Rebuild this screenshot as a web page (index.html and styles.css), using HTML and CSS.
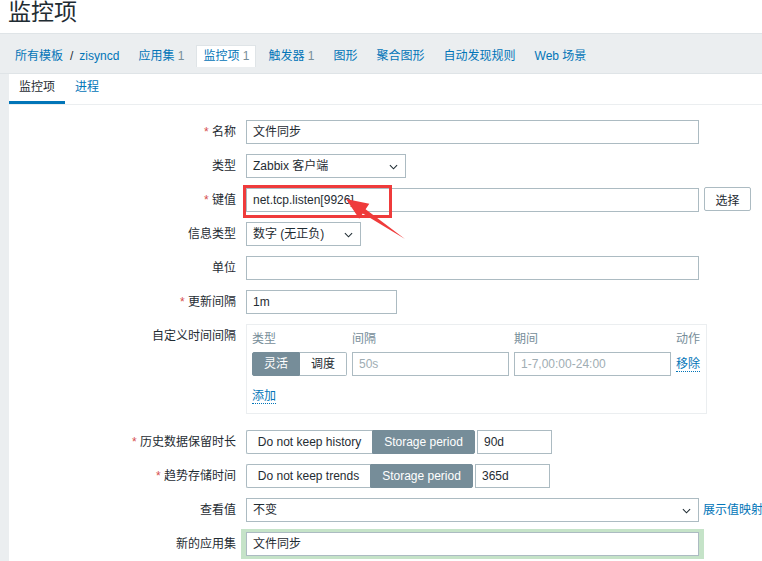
FILE: index.html
```html
<!DOCTYPE html>
<html lang="zh">
<head>
<meta charset="utf-8">
<title>监控项</title>
<link rel="stylesheet" href="styles.css">
</head>
<body>
<header class="title">监控项</header>
<nav class="nav">
  <div class="crumbs"><a>所有模板</a><span class="sep">/</span><a>zisyncd</a></div>
  <a class="nav-item">应用集 <span class="cnt">1</span></a>
  <span class="nav-item active">监控项 <span class="cnt">1</span></span>
  <a class="nav-item">触发器 <span class="cnt">1</span></a>
  <a class="nav-item">图形</a>
  <a class="nav-item">聚合图形</a>
  <a class="nav-item">自动发现规则</a>
  <a class="nav-item">Web 场景</a>
</nav>
<main class="panel">
  <ul class="tabs">
    <li class="tab active">监控项</li>
    <li class="tab"><a>进程</a></li>
  </ul>
  <div class="form">
    <div class="row">
      <label class="lbl"><span class="req">*</span> 名称</label>
      <div class="ctl"><div class="input w-full">文件同步</div></div>
    </div>
    <div class="row">
      <label class="lbl">类型</label>
      <div class="ctl"><div class="select w-type">Zabbix 客户端<svg class="chev" viewBox="0 0 10 6"><path d="M1 1 L5 5 L9 1" /></svg></div></div>
    </div>
    <div class="row">
      <label class="lbl"><span class="req">*</span> 键值</label>
      <div class="ctl"><div class="input w-full">net.tcp.listen[9926]</div><button class="btn">选择</button></div>
    </div>
    <div class="row">
      <label class="lbl">信息类型</label>
      <div class="ctl"><div class="select w-info">数字 (无正负)<svg class="chev" viewBox="0 0 10 6"><path d="M1 1 L5 5 L9 1" /></svg></div></div>
    </div>
    <div class="row">
      <label class="lbl">单位</label>
      <div class="ctl"><div class="input w-full"></div></div>
    </div>
    <div class="row">
      <label class="lbl"><span class="req">*</span> 更新间隔</label>
      <div class="ctl"><div class="input w-upd">1m</div></div>
    </div>
    <div class="row row-tall">
      <label class="lbl">自定义时间间隔</label>
      <div class="ctl">
        <div class="intervals">
          <div class="ih">类型</div>
          <div class="ih">间隔</div>
          <div class="ih">期间</div>
          <div class="ih">动作</div>
          <div class="seg"><span class="seg-b on">灵活</span><span class="seg-b">调度</span></div>
          <div class="input ph">50s</div>
          <div class="input ph">1-7,00:00-24:00</div>
          <div class="act"><a class="link">移除</a></div>
          <div class="add"><a class="link">添加</a></div>
        </div>
      </div>
    </div>
    <div class="row">
      <label class="lbl"><span class="req">*</span> 历史数据保留时长</label>
      <div class="ctl">
        <div class="seg2"><span class="s2 w-h1">Do not keep history</span><span class="s2 on w-h2">Storage period</span></div>
        <div class="input w-days">90d</div>
      </div>
    </div>
    <div class="row">
      <label class="lbl"><span class="req">*</span> 趋势存储时间</label>
      <div class="ctl">
        <div class="seg2"><span class="s2 w-t1">Do not keep trends</span><span class="s2 on w-h2">Storage period</span></div>
        <div class="input w-days">365d</div>
      </div>
    </div>
    <div class="row row-view">
      <label class="lbl">查看值</label>
      <div class="ctl"><div class="select w-full">不变<svg class="chev" viewBox="0 0 10 6"><path d="M1 1 L5 5 L9 1" /></svg></div><a class="maplink">展示值映射</a></div>
    </div>
    <div class="row row-new">
      <label class="lbl">新的应用集</label>
      <div class="ctl"><div class="green"><div class="input w-full">文件同步</div></div></div>
    </div>
  </div>
  <div class="redbox"></div>
  <svg class="arrow" viewBox="0 0 762 561" width="762" height="561">
    <polygon points="346,199 369.3,203.8 365.6,209.2 405,239 362.8,213.4 359.2,218.8" fill="#ef3b3b"/>
  </svg>
</main>
</body>
</html>
```
FILE: styles.css
```css
* { box-sizing: border-box; }
html, body { margin: 0; padding: 0; }
body {
  width: 762px;
  height: 561px;
  overflow: hidden;
  background: #ebeef0;
  font-family: "Liberation Sans", "Noto Sans CJK SC", sans-serif;
  font-size: 12px;
  color: #1f2c33;
  position: relative;
}
a { color: #0275b8; text-decoration: none; }

.title {
  background: #ffffff;
  height: 33px;
  padding: 0 0 0 8px;
  font-size: 23px;
  line-height: 24px;
  font-weight: 400;
  color: #1f2c33;
}

.nav {
  display: flex;
  align-items: center;
  border-top: 1px solid #dfe4e7;
  border-bottom: 1px solid #dfe4e7;
  height: 41px;
  padding: 10px 0 5px 8px;
  gap: 5px;
  white-space: nowrap;
}
.crumbs { display: flex; padding: 4px 7px; line-height: 14px; }
.crumbs .sep { color: #1f2c33; margin: 0 6px 0 7px; }
.nav-item { padding: 4px 7px; line-height: 14px; }
.nav-item .cnt { color: #768d99; }
.nav-item.active {
  background: #ffffff;
  border: 1px solid #dfe4e7;
  border-bottom: none;
  padding: 3px 6px 4px 6px;
  color: #0275b8;
}

.panel {
  margin-left: 9px;
  background: #ffffff;
  height: 487px;
  overflow: hidden;
}

.tabs {
  list-style: none;
  margin: 0;
  padding: 0;
  display: flex;
  border-bottom: 1px solid #ebeef0;
  height: 31px;
}
.tab {
  padding: 0 10px;
  line-height: 27px;
  height: 30px;
  border-bottom: 3px solid transparent;
}
.tab.active { border-bottom-color: #0275b8; color: #1f2c33; }

.form { padding-top: 15px; }
.row {
  display: grid;
  grid-template-columns: 227px 1fr;
  column-gap: 10px;
  margin-bottom: 10px;
}
.lbl {
  text-align: right;
  line-height: 24px;
  white-space: nowrap;
}
.req { color: #d64e4e; }
.ctl { display: flex; align-items: flex-start; gap: 5px; white-space: nowrap; }

.input, .select {
  height: 24px;
  border: 1px solid #acbbc2;
  background: #ffffff;
  padding: 0 6px;
  line-height: 22px;
  color: #1f2c33;
  white-space: nowrap;
  overflow: hidden;
}
.select { position: relative; padding-right: 24px; }
.chev {
  position: absolute;
  right: 7px;
  top: 9px;
  width: 9px;
  height: 6px;
  fill: none;
  stroke: #1f2c33;
  stroke-width: 1.2;
}
.w-full { width: 453px; }
.w-type { width: 160px; }
.w-info { width: 115px; }
.w-upd { width: 151px; }
.w-days { width: 75px; }

.btn {
  height: 24px;
  width: 47px;
  border: 1px solid #acbbc2;
  border-radius: 2px;
  background: #ffffff;
  font: inherit;
  color: #1f2c33;
  padding: 0;
  margin-top: -1px;
}

.row-tall { margin-bottom: 16px; }
.intervals {
  width: 461px;
  height: 90px;
  border: 1px solid #ebeef0;
  padding: 4px 5px 0 5px;
  display: grid;
  grid-template-columns: 95px 157px 157px 1fr;
  grid-template-rows: 20px 24px 30px;
  column-gap: 5px;
  row-gap: 3px;
}
.ih { color: #768d99; line-height: 20px; }
.seg { display: flex; }
.seg-b {
  width: 48px;
  height: 24px;
  line-height: 22px;
  text-align: center;
  border: 1px solid #acbbc2;
  border-left: none;
  color: #1f2c33;
}
.seg-b.on { background: #768d99; border-color: #768d99; color: #ffffff; border-left: 1px solid #768d99; border-radius: 2px 0 0 2px; }
.seg-b:last-child { border-radius: 0 2px 2px 0; width: 47px; }
.ph { color: #a0adb3; }
.act { line-height: 24px; }
.add { grid-column: 1 / 5; line-height: 30px; padding-top: 2px; }
.link { border-bottom: 1px dotted #0275b8; }

.seg2 { display: flex; }
.s2 {
  height: 24px;
  line-height: 22px;
  text-align: center;
  border: 1px solid #acbbc2;
  color: #1f2c33;
}
.s2:first-child { border-right: none; border-radius: 2px 0 0 2px; }
.s2.on { background: #768d99; border-color: #768d99; color: #ffffff; border-radius: 0 2px 2px 0; }
.w-h1 { width: 126px; }
.w-t1 { width: 124px; }
.w-h2 { width: 103px; }
.seg2 + .input { margin-left: -3px; }

.row-view { margin-bottom: 7px; }
.maplink { line-height: 24px; margin-left: -1px; }
.row-new .lbl { padding-top: 3px; }
.green {
  background: #c5e3c8;
  padding: 3px 5px;
  margin-left: -5px;
  width: 463px;
}

.redbox {
  position: absolute;
  left: 243px;
  top: 185px;
  width: 149px;
  height: 33px;
  border: 3px solid #ef3b3b;
}
.arrow {
  position: absolute;
  left: 0;
  top: 0;
  pointer-events: none;
}
```
